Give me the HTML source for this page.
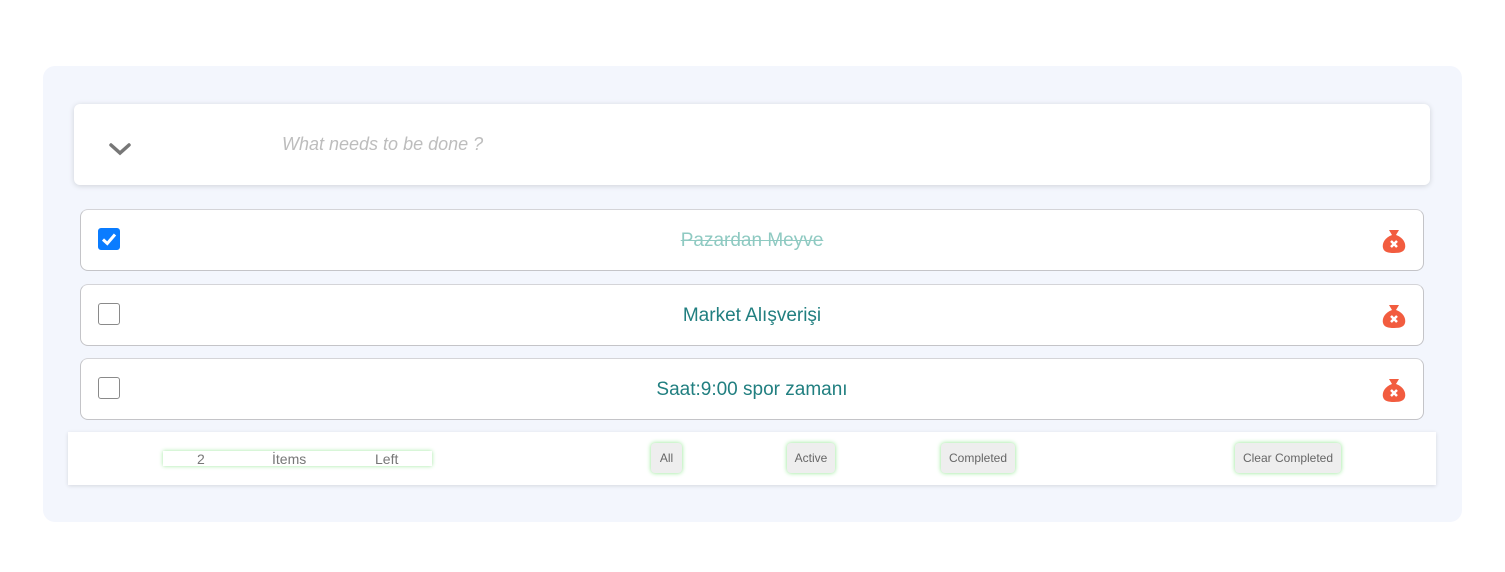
<!DOCTYPE html>
<html><head><meta charset="utf-8"><style>
*{box-sizing:border-box;margin:0;padding:0}
body{width:1505px;height:572px;background:#fff;font-family:"Liberation Sans",sans-serif;position:relative;overflow:hidden}
.wrap{position:absolute;left:43px;top:66px;width:1419px;height:456px;background:#f3f6fd;border-radius:12px}
.inp{position:absolute;left:74px;top:104px;width:1356px;height:81px;background:#fff;border-radius:6px;box-shadow:0 1px 6px rgba(0,0,0,.15)}
.ph{position:absolute;left:282px;top:134px;font-size:18px;font-style:italic;color:#bdbdbd}
.item{position:absolute;left:80px;width:1344px;height:62px;background:#fff;border:1px solid #c4c4c8;border-top-color:#d4d4d8;border-radius:8px}
.cb{position:absolute;left:17px;top:18px;width:22px;height:22px;border:1px solid #8a8a8a;border-radius:3px;background:#fff}
.cb.on{background:#0a7cff;border-color:#0a7cff}
.txt{position:absolute;left:0;right:0;top:20px;text-align:center;font-size:19px;color:#217f80}
.txt.done{color:#8fcac2;text-decoration:line-through}
.ic{position:absolute;left:1301px;top:18px}
.foot{position:absolute;left:68px;top:432px;width:1368px;height:53px;background:#fff;box-shadow:0 1px 4px rgba(0,0,0,.12)}
.left{position:absolute;left:163px;top:451px;width:269px;height:15px;background:#fff;box-shadow:0 0 4px #9fe89f;font-size:14px;color:#777;line-height:16px}
.left span{position:absolute;top:0}
.btn{position:absolute;top:443px;height:30px;background:#eee;border-radius:4px;box-shadow:0 0 5px #8fe88f;font-size:12px;color:#666;line-height:31px;text-align:center}
</style></head><body>
<div class="wrap"></div>
<div class="inp"><svg style="position:absolute;left:35px;top:38px" width="22" height="14" viewBox="0 0 22 14"><path d="M2 3 L11 11 L20 3" stroke="#777" stroke-width="3.5" fill="none" stroke-linecap="round"/></svg></div>
<div class="ph">What needs to be done ?</div>

<div class="item" style="top:209px"><div class="cb on"><svg width="20" height="20" viewBox="0 0 20 20"><path d="M4 10.5 L8.3 14.5 L16 5.5" stroke="#fff" stroke-width="3" fill="none"/></svg></div><div class="txt done">Pazardan Meyve</div>
<svg class="ic" width="24" height="26" viewBox="0 0 24 26"><path d="M7 2 L17 2 L14 7 L10 7 Z" fill="#f25c3f"/><path d="M10 7 C2 10 0 16 1 20 C2 24 6 25 12 25 C18 25 22 24 23 20 C24 16 22 10 14 7 Z" fill="#f25c3f"/><path d="M9 13 L15 19 M15 13 L9 19" stroke="#fff" stroke-width="2.5"/></svg></div>

<div class="item" style="top:284px"><div class="cb"></div><div class="txt">Market Alışverişi</div>
<svg class="ic" width="24" height="26" viewBox="0 0 24 26"><path d="M7 2 L17 2 L14 7 L10 7 Z" fill="#f25c3f"/><path d="M10 7 C2 10 0 16 1 20 C2 24 6 25 12 25 C18 25 22 24 23 20 C24 16 22 10 14 7 Z" fill="#f25c3f"/><path d="M9 13 L15 19 M15 13 L9 19" stroke="#fff" stroke-width="2.5"/></svg></div>

<div class="item" style="top:358px"><div class="cb"></div><div class="txt">Saat:9:00 spor zamanı</div>
<svg class="ic" width="24" height="26" viewBox="0 0 24 26"><path d="M7 2 L17 2 L14 7 L10 7 Z" fill="#f25c3f"/><path d="M10 7 C2 10 0 16 1 20 C2 24 6 25 12 25 C18 25 22 24 23 20 C24 16 22 10 14 7 Z" fill="#f25c3f"/><path d="M9 13 L15 19 M15 13 L9 19" stroke="#fff" stroke-width="2.5"/></svg></div>

<div class="foot"></div>
<div class="left"><span style="left:34px">2</span><span style="left:109px">İtems</span><span style="left:212px">Left</span></div>
<div class="btn" style="left:651px;width:31px">All</div>
<div class="btn" style="left:787px;width:48px">Active</div>
<div class="btn" style="left:941px;width:74px">Completed</div>
<div class="btn" style="left:1235px;width:106px">Clear Completed</div>
</body></html>
